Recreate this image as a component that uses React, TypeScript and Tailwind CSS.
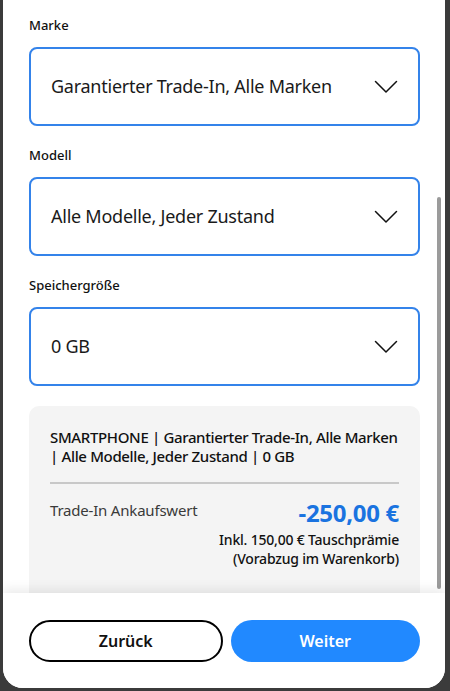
import React from "react";

function Chevron() {
  return (
    <svg width="24" height="14" viewBox="0 0 24 14" fill="none" className="shrink-0">
      <path d="M1.5 1.5 L12 12 L22.5 1.5" stroke="#111" strokeWidth="1.5" strokeLinecap="round" strokeLinejoin="round" />
    </svg>
  );
}

function Field({ label, value }: { label: string; value: string }) {
  return (
    <div className="flex flex-col">
      <div className="h-[18px] text-[13px] leading-[18px] font-medium text-[#111] mb-[13px]">{label}</div>
      <div className="h-[79px] rounded-[8px] border-2 border-[#3483ea] flex items-center justify-between pl-[20px] pr-[20px]">
        <span className="text-[18px] text-[#1a1a1a] font-normal tracking-[-0.25px]">{value}</span>
        <Chevron />
      </div>
    </div>
  );
}

export default function App() {
  return (
    <div
      className="w-[450px] h-[691px] bg-[#3b3b3b] pl-[3px] pr-[5px] pb-[3px] flex"
      style={{ fontFamily: '"Noto Sans", "Open Sans", sans-serif' }}
    >
      <div className="flex-1 bg-white rounded-b-[20px] overflow-hidden flex flex-col">
        <div className="relative flex-1 overflow-hidden">
          <div className="pl-[26px] pr-[25px] pt-[16px] flex flex-col gap-[20px]">
            <Field label="Marke" value="Garantierter Trade-In, Alle Marken" />
            <Field label="Modell" value="Alle Modelle, Jeder Zustand" />
            <Field label="Speichergröße" value="0 GB" />
            <div className="rounded-[10px] bg-[#f4f4f4] pl-[21px] pr-[19px] pt-[22px] pb-[40px]">
              <div className="text-[15px] leading-[19px] font-medium text-[#111] tracking-[-0.35px]">
                SMARTPHONE | Garantierter Trade-In, Alle Marken | Alle Modelle, Jeder Zustand | 0 GB
              </div>
              <div className="h-[2px] bg-[#c8c8c8] mt-[16px] mb-[14px] mr-[2px]" />
              <div className="flex justify-between items-start pr-[2px]">
                <span className="text-[15px] leading-[20px] text-[#3a3a3a] font-normal mt-[2px] tracking-[-0.2px]">Trade-In Ankaufswert</span>
                <div className="flex flex-col items-end">
                  <span className="text-[24px] leading-[30px] font-bold text-[#1a73e0] tracking-[-0.3px]">-250,00 €</span>
                  <span className="text-[14px] leading-[19px] font-medium text-[#111] mt-[2px] tracking-[-0.2px]">Inkl. 150,00 € Tauschprämie</span>
                  <span className="text-[14px] leading-[19px] font-medium text-[#111] tracking-[-0.2px]">(Vorabzug im Warenkorb)</span>
                </div>
              </div>
            </div>
          </div>
          <div className="absolute left-[434px] top-[197px] w-[4px] h-[392px] rounded-full bg-[#9b9b9b]" />
        </div>
        <div className="relative bg-white shadow-[0_-4px_10px_rgba(0,0,0,0.08)] pl-[26px] pr-[25px] pt-[27px] pb-[26px] flex gap-[8px]">
          <button className="flex-1 h-[42px] rounded-full border-2 border-black bg-white text-[16px] font-semibold text-[#111]">
            Zurück
          </button>
          <button className="flex-1 h-[42px] rounded-full bg-[#2189ff] text-[16px] font-semibold text-white">
            Weiter
          </button>
        </div>
      </div>
    </div>
  );
}
